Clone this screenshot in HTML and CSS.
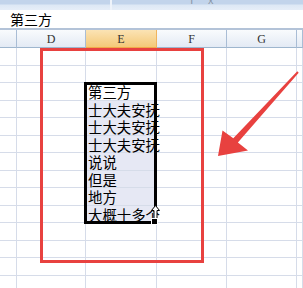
FILE: index.html
```html
<!DOCTYPE html>
<html lang="zh-CN">
<head>
  <meta charset="UTF-8">
  <title>工作表</title>
  <link rel="stylesheet" href="styles.css">
</head>
<body>
  <div class="app">
    <div class="ribbon">
      <div class="namebox"></div>
      <div class="fxbox"><span class="fxhint">f x</span></div>
    </div>
    <div class="formula">第三方</div>
    <div class="sheet">
      <div class="hd"></div><div class="hd">D</div><div class="hd sel">E</div><div class="hd">F</div><div class="hd">G</div><div class="hd"></div>
      <div class="c"></div><div class="c"></div><div class="c"></div><div class="c"></div><div class="c"></div><div class="c"></div>
      <div class="c"></div><div class="c"></div><div class="c"></div><div class="c"></div><div class="c"></div><div class="c"></div>
      <div class="c"></div><div class="c"></div><div class="c t">第三方</div><div class="c"></div><div class="c"></div><div class="c"></div>
      <div class="c"></div><div class="c"></div><div class="c t on">士大夫安抚</div><div class="c"></div><div class="c"></div><div class="c"></div>
      <div class="c"></div><div class="c"></div><div class="c t on">士大夫安抚</div><div class="c"></div><div class="c"></div><div class="c"></div>
      <div class="c"></div><div class="c"></div><div class="c t on">士大夫安抚</div><div class="c"></div><div class="c"></div><div class="c"></div>
      <div class="c"></div><div class="c"></div><div class="c t on">说说</div><div class="c"></div><div class="c"></div><div class="c"></div>
      <div class="c"></div><div class="c"></div><div class="c t on">但是</div><div class="c"></div><div class="c"></div><div class="c"></div>
      <div class="c"></div><div class="c"></div><div class="c t on">地方</div><div class="c"></div><div class="c"></div><div class="c"></div>
      <div class="c"></div><div class="c"></div><div class="c t on">大概十多个</div><div class="c"></div><div class="c"></div><div class="c"></div>
      <div class="c"></div><div class="c"></div><div class="c"></div><div class="c"></div><div class="c"></div><div class="c"></div>
      <div class="c"></div><div class="c"></div><div class="c"></div><div class="c"></div><div class="c"></div><div class="c"></div>
      <div class="c"></div><div class="c"></div><div class="c"></div><div class="c"></div><div class="c"></div><div class="c"></div>
      <div class="c"></div><div class="c"></div><div class="c"></div><div class="c"></div><div class="c"></div><div class="c"></div>

      <div class="selbox">
        <svg class="pointer" width="9" height="14" viewBox="0 0 9 14">
          <path d="M4.5 0.5 L8.5 5.5 L6 5.5 L6 13.5 L3 13.5 L3 5.5 L0.5 5.5 Z" fill="#fff" stroke="#000" stroke-width="1"/>
        </svg>
        <div class="handle"></div>
      </div>
      <div class="mark"></div>
    </div>
    <svg class="arrow" width="303" height="288" viewBox="0 0 303 288">
      <polygon points="218,156 222.5,130.5 233.3,138.3 297.3,71.3 298.7,72.7 237.9,142.6 248,150.5" fill="#e8413f"/>
    </svg>
  </div>
</body>
</html>
```

FILE: styles.css
```css
html,
body {
  margin: 0;
  padding: 0;
  background: #fff;
}
.app {
  position: relative;
  width: 303px;
  height: 288px;
  overflow: hidden;
  font-family: "Noto Sans CJK SC", "Liberation Sans", sans-serif;
}
.ribbon {
  height: 10px;
  display: flex;
  background: linear-gradient(#c2d4eb 0, #c2d4eb 4px, #dde8f5 5px, #e6eef8 10px);
}
.namebox {
  width: 110px;
  border-right: 2px solid #eef3fa;
}
.fxbox {
  flex: 1;
  position: relative;
  overflow: hidden;
}
.fxhint {
  position: absolute;
  left: 78px;
  top: -9px;
  font-size: 11px;
  letter-spacing: 6px;
  color: #8a97a8;
}
.formula {
  height: 20px;
  box-sizing: border-box;
  padding: 0 0 0 10px;
  font-size: 14px;
  line-height: 19px;
  color: #000;
  background: #fff;
  border-bottom: 2px solid #b3c3d8;
}
.sheet {
  position: relative;
  display: grid;
  grid-template-columns: 17px 69px 71px 70px 70px 6px;
  grid-template-rows: 18px repeat(14, 17.5px);
}
.hd {
  box-sizing: border-box;
  border-right: 1px solid #a9bdd5;
  border-bottom: 1px solid #9eb6ce;
  background: linear-gradient(#f9fbfd, #e3eaf4);
  font-family: "Liberation Serif", serif;
  font-size: 12px;
  line-height: 18px;
  text-align: center;
  color: #333;
}
.hd.sel {
  background: linear-gradient(#fbe3b4, #f4c978);
  border-bottom-color: #f0a94a;
  border-right-color: #f0b45e;
}
.c {
  box-sizing: border-box;
  border-right: 1px solid #d6dce9;
  border-bottom: 1px solid #d6dce9;
}
.c.t {
  padding-left: 2px;
  font-size: 14.4px;
  line-height: 17px;
  white-space: nowrap;
  color: #000;
}
.c.on {
  background: #e6e8f4;
}
.selbox {
  position: absolute;
  left: 84px;
  top: 52px;
  width: 73px;
  height: 142px;
  box-sizing: border-box;
  border: 3px solid #000;
}
.pointer {
  position: absolute;
  right: -6px;
  bottom: 2px;
}
.handle {
  position: absolute;
  right: -4px;
  bottom: -4px;
  width: 5px;
  height: 5px;
  background: #000;
  border: 1px solid #fff;
}
.mark {
  position: absolute;
  left: 40px;
  top: 18px;
  width: 164px;
  height: 215px;
  box-sizing: border-box;
  border: 3px solid #e8413f;
}
.arrow {
  position: absolute;
  left: 0;
  top: 0;
}
```
